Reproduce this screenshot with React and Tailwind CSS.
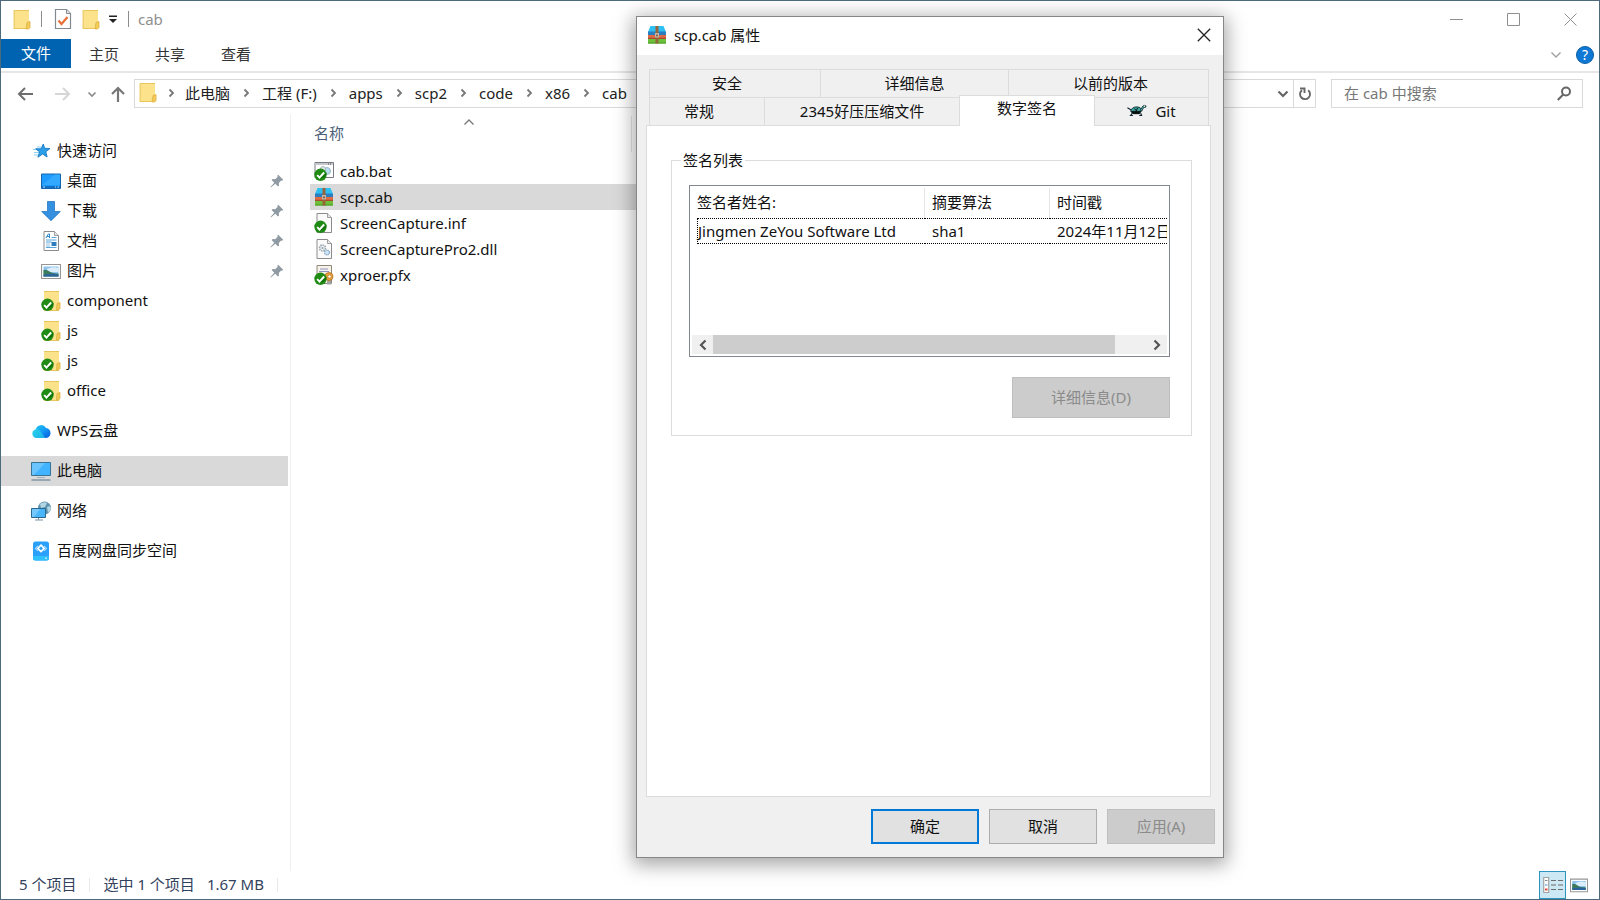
import React from "react";

const Folder = ({ className = "" }) => (
  <svg viewBox="0 0 18 21" className={"h-[21px] w-[18px] shrink-0 " + className} aria-hidden="true">
    <path d="M1 1h15v19H1z" fill="#fbe28b" />
    <path d="M1 1h15v1H1z" fill="#e8c65e" />
    <path d="M0.5 1h1.5v19H0.5z" fill="#efd070" />
    <path d="M1 19h15v1H1z" fill="#e9c65c" />
    <path d="M14 13.5l3-1v6l-1.5 1.5H13z" fill="#f3cb56" stroke="#dbb142" strokeWidth=".8" />
  </svg>
);

const Check = () => (
  <g>
    <circle cx="6.5" cy="13.8" r="6.2" fill="#1f8a14" />
    <path d="M3 16a6 6 0 0 0 9.5-4.500A9 9 0 0 1 3 16z" fill="#0d6a08" />
    <path d="M3.200 14.200l2.300 2.500 4.600-5.200" fill="none" stroke="#fff" strokeWidth="1.900" />
  </g>
);

const SyncedFolder = () => (
  <svg viewBox="0 0 20 20" className="h-5 w-5 shrink-0" aria-hidden="true">
    <path d="M3 0h15v20H3z" fill="#fbe28b" />
    <path d="M3 0h15v1H3zM3 19h15v1H3z" fill="#e8c65e" />
    <path d="M16 12.500l3-1v6l-1.500 1.500H15.500z" fill="#f3cb56" stroke="#dbb142" strokeWidth=".8" />
    <Check />
  </svg>
);

const Chevron = ({ d, className = "", width = 2 }) => (
  <svg viewBox="0 0 12 12" className={"h-3 w-3 shrink-0 " + className} fill="none" stroke="currentColor" strokeWidth={width} aria-hidden="true">
    <path d={d} />
  </svg>
);
const DOWN = "M1.500 3.500L6 8l4.500-4.500";
const RIGHT = "M4.500 2.500L8 6 4.500 9.500";
const UP = "M1.500 8.500L6 4l4.500 4.500";

const Star = () => (
  <svg viewBox="0 0 20 20" className="h-5 w-5 shrink-0" aria-hidden="true">
    <path d="M2 8.500h6M3 11.500h5M3 14h4M6 6h4" stroke="#8fd0f7" strokeWidth="1" />
    <path d="M12.300 3l1.300 4.300 5.400.2-4.200 3.200 1.300 5.300-4.500-3-4.700 3.200 1.700-5.300-3.900-3.100h5.400z" fill="#2d9fe8" stroke="#1478c4" strokeWidth=".9" />
  </svg>
);
const Desktop = () => (
  <svg viewBox="0 0 20 20" className="h-5 w-5 shrink-0" aria-hidden="true">
    <path d="M.5 3h19v14.500H.5z" fill="#1e9bff" stroke="#1566ac" />
    <path d="M1 14L14 3.500h5V14z" fill="#40b0ff" opacity=".6" />
    <path d="M1 15h18v2H1z" fill="#0f6fc4" />
    <path d="M2 16h2M14 16h1M16.500 16h1.500" stroke="#bfe2ff" />
  </svg>
);
const Download = () => (
  <svg viewBox="0 0 20 20" className="h-5 w-5 shrink-0" aria-hidden="true">
    <path d="M6.500.5h7v10h5.800L10 19.700.7 10.500h5.800z" fill="#3590e0" stroke="#2377c6" strokeWidth=".8" />
  </svg>
);
const Doc = () => (
  <svg viewBox="0 0 20 20" className="h-5 w-5 shrink-0" aria-hidden="true">
    <path d="M3 .5h10.500L17.500 4.500v15H3z" fill="#fff" stroke="#8b8b8b" />
    <path d="M13.500.5v4h4" fill="#e6e6e6" stroke="#8b8b8b" strokeWidth=".8" />
    <path d="M5 7l2.300-4h1.200v4M6 5.500h3" fill="none" stroke="#2a88cf" />
    <path d="M10.500 6.500h5M5 9h10.500M5 11h5.500M5 16.500h10.500" stroke="#58a5dc" />
    <path d="M5 13h4M5 15h4" stroke="#8ebfe2" />
    <path d="M10.500 11h5v4h-5z" fill="#2f7fc0" />
  </svg>
);
const Picture = ({ className = "h-5 w-5" }) => (
  <svg viewBox="0 0 20 20" className={"shrink-0 " + className} aria-hidden="true">
    <path d="M.5 3.500h19v14H.5z" fill="#fff" stroke="#969696" strokeWidth="1.200" />
    <path d="M2.500 5.500h15v10h-15z" fill="#8fc4ef" />
    <path d="M6 8q5-3 11.500-1v4H6z" fill="#dceefa" />
    <path d="M2.500 9q3-1 6 1.500t9 2v3h-15z" fill="#3c7a5c" />
    <path d="M2.500 14q8-2 15-.5v2h-15z" fill="#2d649b" />
  </svg>
);
const Cloud = () => (
  <svg viewBox="0 0 20 20" className="h-5 w-5 shrink-0" aria-hidden="true">
    <defs>
      <linearGradient id="cloud" x1="0" y1="0" x2="1" y2="1">
        <stop offset="0" stopColor="#24d0f2" />
        <stop offset=".5" stopColor="#139bf5" />
        <stop offset="1" stopColor="#0755dc" />
      </linearGradient>
    </defs>
    <path d="M5.500 17a4.500 4.500 0 0 1-.7-8.600A5.500 5.500 0 0 1 15 7a5 5 0 0 1-1 10z" fill="url(#cloud)" />
    <path d="M1 12.500a4.500 4.500 0 0 1 7.500-3.300c2.500 2 3 5 6 7.800h-9A4.500 4.500 0 0 1 1 12.500z" fill="#29d5e6" opacity=".65" />
  </svg>
);
const Computer = () => (
  <svg viewBox="0 0 20 20" className="h-5 w-5 shrink-0" aria-hidden="true">
    <path d="M.5 1.500h19v13H.5z" fill="#42b4ff" stroke="#377498" />
    <path d="M1 2h13L3 14H1z" fill="#86d1ff" opacity=".6" />
    <path d="M6 16.500h8" stroke="#9eb3c1" />
    <path d="M.5 19h19" stroke="#758b9d" strokeWidth="1.300" />
  </svg>
);
const Network = () => (
  <svg viewBox="0 0 20 20" className="h-5 w-5 shrink-0" aria-hidden="true">
    <circle cx="13.500" cy="7" r="6.500" fill="#5d93ad" />
    <path d="M9 3q4-3 7-1l-2 4-4 1zM16 6l3-1 1 3-3 4z" fill="#b4d5e2" />
    <path d="M.5 7.500h14v9H.5z" fill="#49b5fb" stroke="#2c688d" />
    <path d="M1 8h8l-6 8H1z" fill="#92d5ff" opacity=".6" />
    <path d="M4 19h8M7.500 17v2" stroke="#7c94a4" />
  </svg>
);
const Baidu = () => (
  <svg viewBox="0 0 20 20" className="h-5 w-5 shrink-0" aria-hidden="true">
    <rect x="2" y=".5" width="16" height="19" rx="2.500" fill="#2ba0fa" />
    <path d="M2 15h16v2a2.500 2.500 0 0 1-2.500 2.500h-11A2.500 2.500 0 0 1 2 17z" fill="#30c0fb" />
    <path d="M10 4.200l3.200 3.200L10 10.600 6.800 7.400z" fill="none" stroke="#fff" strokeWidth="1.700" />
    <path d="M6.800 5L4.500 7.400l2.300 2.400M13.200 5l2.300 2.400-2.300 2.400" fill="none" stroke="#a5d8ff" strokeWidth="1.100" />
    <circle cx="15" cy="17.200" r=".8" fill="#fff" />
  </svg>
);
const Pin = () => (
  <svg viewBox="0 0 14 14" className="h-[14px] w-[14px] shrink-0" aria-hidden="true">
    <path d="M8.200.8l5 5-1 .9-1-.3-2.400 2.500.2 2.500-1 1L5.300 9.700.8 13.400l-.4-.3L4.300 8.700 1.600 6l1-1 2.600.2 2.500-2.400-.4-1z" fill="#8f9aa3" />
  </svg>
);

const Archive = () => (
  <svg viewBox="0 0 20 20" className="h-5 w-5 shrink-0" aria-hidden="true">
    <path d="M3.500 1h13L19 7H1z" fill="#2fc0f3" />
    <path d="M1 6.500h18v3.500H1z" fill="#2a7fc0" />
    <path d="M1 10h18v4H1z" fill="#dd6a44" />
    <path d="M1 12.800h18v1.200H1z" fill="#a9492f" />
    <path d="M1 14h18v4.500H1z" fill="#6cc03a" />
    <path d="M1 17.500h18v1H1z" fill="#4a9a2a" />
    <path d="M8.500 1h3v17.500h-3z" fill="#97653a" />
    <path d="M8 8h4v4.500H8z" fill="#c3b6a8" />
    <path d="M9.200 9.500h1.600v1.800H9.200z" fill="#795032" />
  </svg>
);
const Bat = () => (
  <svg viewBox="0 0 20 20" className="h-5 w-5 shrink-0" aria-hidden="true">
    <path d="M1 1.500h18.500v15H1z" fill="#fff" stroke="#777b80" />
    <path d="M1.500 2h17.500v2H1.500z" fill="#c5c9ce" />
    <path d="M14 3h1M16 3h1" stroke="#555" />
    <circle cx="13" cy="10" r="3.500" fill="#b9dcef" stroke="#8aafc2" strokeWidth=".8" />
    <circle cx="9" cy="8" r="2.500" fill="#dfe7eb" stroke="#9aa" strokeWidth=".8" />
    <Check />
  </svg>
);
const Page = ({ children }) => (
  <svg viewBox="0 0 20 20" className="h-5 w-5 shrink-0" aria-hidden="true">
    <path d="M3 .5h10.500l4 4v15H3z" fill="#fbfbfb" stroke="#8b8b8b" />
    <path d="M13.500.5v4h4" fill="#e6e6e6" stroke="#8b8b8b" strokeWidth=".8" />
    {children}
  </svg>
);
const Inf = () => (
  <Page>
    <Check />
  </Page>
);
const Dll = () => (
  <Page>
    <circle cx="8.500" cy="9" r="3" fill="#e6ecef" stroke="#9aa6ad" strokeWidth="1.500" strokeDasharray="1.500 .8" />
    <circle cx="8.500" cy="9" r="1" fill="#9aa6ad" />
    <circle cx="13" cy="13.500" r="2.500" fill="#cfe3f2" stroke="#86a9c6" strokeWidth="1.300" strokeDasharray="1.300 .7" />
  </Page>
);
const Pfx = () => (
  <svg viewBox="0 0 20 20" className="h-5 w-5 shrink-0" aria-hidden="true">
    <path d="M3 .5h14.500v18H3z" fill="#f7f3ea" stroke="#8f8779" />
    <path d="M6 4h8M5 6.500h10" stroke="#8c93c0" />
    <path d="M13 15v4.500h4V15z" fill="#a3a3a3" />
    <circle cx="15" cy="11.500" r="4" fill="#e9a33c" stroke="#b26f1c" strokeWidth=".8" />
    <circle cx="15.500" cy="11.500" r="1.600" fill="#fff" stroke="#b26f1c" strokeWidth=".6" />
    <Check />
  </svg>
);

const Turtle = () => (
  <svg viewBox="0 0 22 14" className="h-[13px] w-5 shrink-0" aria-hidden="true">
    <path d="M.5 4l5 3M6 10l-2 2.500h2.500M15 10l1 2.500h-2.500" fill="none" stroke="#123" strokeWidth="1.300" />
    <path d="M4 8q1-5 7-5 4 0 5 3l-2 4H6z" fill="#3fa29f" stroke="#102a2a" strokeWidth=".9" />
    <path d="M8 5l3 2.500M12 4l-2 3M5 8h10l-1.500 2.500H7z" fill="#050c0c" stroke="#050c0c" />
    <path d="M15 6l2.500-4q2-1.200 3.500 0l-.5 1.500h-2L16 8z" fill="#4eb0ac" stroke="#102a2a" strokeWidth=".9" />
    <circle cx="19.200" cy="2.300" r=".7" fill="#fff" />
  </svg>
);

const places = [
  { name: "桌面", Icon: Desktop, pinned: true },
  { name: "下载", Icon: Download, pinned: true },
  { name: "文档", Icon: Doc, pinned: true },
  { name: "图片", Icon: Picture, pinned: true },
  { name: "component", Icon: SyncedFolder },
  { name: "js", Icon: SyncedFolder },
  { name: "js", Icon: SyncedFolder },
  { name: "office", Icon: SyncedFolder },
];
const roots = [
  { name: "WPS云盘", Icon: Cloud },
  { name: "此电脑", Icon: Computer, selected: true },
  { name: "网络", Icon: Network },
  { name: "百度网盘同步空间", Icon: Baidu },
];
const files = [
  { name: "cab.bat", Icon: Bat },
  { name: "scp.cab", Icon: Archive, selected: true },
  { name: "ScreenCapture.inf", Icon: Inf },
  { name: "ScreenCapturePro2.dll", Icon: Dll },
  { name: "xproer.pfx", Icon: Pfx },
];
const crumbs = ["此电脑", "工程 (F:)", "apps", "scp2", "code", "x86", "cab"];

function TitleBar() {
  return (
    <header className="flex h-[38px] items-center pb-0.5 pl-3">
      <Folder />
      <span className="ml-2.5 h-4 w-px bg-[#8c8c8c]" />
      <button aria-label="属性" className="ml-3">
        <svg viewBox="0 0 18 20" className="h-5 w-[18px]" aria-hidden="true">
          <path d="M1.500.5h11l4 4v15h-15z" fill="#fff" stroke="#848b90" strokeWidth="1.200" />
          <path d="M12.500.5v4h4" fill="#dfe2e4" stroke="#848b90" />
          <path d="M4.500 11.500l3 3.500 6-7" fill="none" stroke="#e8703a" strokeWidth="2.200" />
        </svg>
      </button>
      <button aria-label="新建文件夹" className="ml-2.5"><Folder /></button>
      <button aria-label="自定义快速访问工具栏" className="ml-2">
        <svg viewBox="0 0 10 8" className="h-2 w-2.5" aria-hidden="true">
          <path d="M1 .5h8v1.500H1zM1 4h8L5 8z" fill="#222" />
        </svg>
      </button>
      <span className="ml-2.5 h-4 w-px bg-[#8c8c8c]" />
      <h1 className="ml-[9px] flex-1 text-[#8f8f8f]">cab</h1>
      <div className="flex h-full text-[#8f8f8f]">
        <button aria-label="最小化" className="flex w-[57px] items-center justify-center">
          <svg viewBox="0 0 13 13" className="h-[13px] w-[13px]"><path d="M0 6.500h13" stroke="currentColor" /></svg>
        </button>
        <button aria-label="最大化" className="flex w-[57px] items-center justify-center">
          <svg viewBox="0 0 13 13" className="h-[13px] w-[13px]"><path d="M.5.5h12v12H.5z" fill="none" stroke="currentColor" /></svg>
        </button>
        <button aria-label="关闭" className="flex w-[57px] items-center justify-center">
          <svg viewBox="0 0 13 13" className="h-[13px] w-[13px]"><path d="M.5.5l12 12M12.500.5l-12 12" stroke="currentColor" /></svg>
        </button>
      </div>
    </header>
  );
}

function Ribbon() {
  return (
    <nav className="flex h-[34px] items-start border-b-2 border-[#e6e6e6] text-[#333]">
      <button className="h-[29px] w-[70px] bg-[#0063b1] pb-0.5 text-white">文件</button>
      {["主页", "共享", "查看"].map((t) => (
        <button key={t} className="h-[29px] w-[66px]">{t}</button>
      ))}
      <div className="ml-auto flex h-8 items-center gap-3.5 pr-[5px]">
        <button aria-label="展开功能区" className="text-[#a3a3a3]"><Chevron d={DOWN} width={1.5} /></button>
        <button aria-label="帮助" className="flex h-[18px] w-[18px] items-center justify-center rounded-full border border-[#0a5fa8] bg-[#0f78d4] text-sm leading-4 text-white">?</button>
      </div>
    </nav>
  );
}

function AddressRow() {
  return (
    <div className="flex h-[41px] items-center pr-4 pl-[15px]">
      <button aria-label="后退" className="text-[#6e6e6e]">
        <svg viewBox="0 0 18 16" className="h-4 w-[18px]" fill="none" stroke="currentColor" strokeWidth="2"><path d="M17 8H3M9 2L3 8l6 6" /></svg>
      </button>
      <button aria-label="前进" className="ml-5 text-[#d6d6d6]">
        <svg viewBox="0 0 18 16" className="h-4 w-[18px]" fill="none" stroke="currentColor" strokeWidth="2"><path d="M1 8h14M9 2l6 6-6 6" /></svg>
      </button>
      <button aria-label="最近浏览的位置" className="ml-3.5 text-[#8c8c8c]"><Chevron d="M2.500 4.500L6 8l3.500-3.500" width={1.700} /></button>
      <button aria-label="上移" className="ml-3 text-[#777]">
        <svg viewBox="0 0 16 18" className="h-[18px] w-4" fill="none" stroke="currentColor" strokeWidth="2.200"><path d="M8 17V3M2 9l6-6 6 6" /></svg>
      </button>
      <div className="ml-2 flex h-[29px] flex-1 items-stretch border border-[#d9d9d9]">
        <div className="flex flex-1 items-center pb-0.5 pl-1">
          <Folder />
          {crumbs.map((c, i) => (
            <React.Fragment key={c}>
              <span className={"flex justify-center " + (i ? "w-8" : "w-7")}>
                <Chevron d={RIGHT} width={1.800} className="text-[#777]" />
              </span>
              <a href="#" className="whitespace-nowrap text-[#222]">{c}</a>
            </React.Fragment>
          ))}
        </div>
        <button aria-label="以前的位置" className="flex w-5 items-center justify-center text-[#666]"><Chevron d={DOWN} width={2.200} /></button>
        <button aria-label="刷新" className="flex w-[22px] items-center justify-center border-l border-[#d9d9d9] text-[#666]">
          <svg viewBox="0 0 14 14" className="h-[14px] w-[14px]" fill="none" stroke="currentColor" strokeWidth="1.900">
            <path d="M10.200 3.300A5 5 0 1 1 4 3.200" />
            <path d="M2 1.500h4.500V6" />
          </svg>
        </button>
      </div>
      <label className="ml-[15px] flex h-[29px] w-[252px] items-center border border-[#d9d9d9] pr-2.5 pl-3">
        <input type="text" aria-label="搜索" placeholder="在 cab 中搜索" className="min-w-0 flex-1 bg-transparent pb-0.5 outline-none placeholder:text-[#777]" />
        <svg viewBox="0 0 15 15" className="h-[15px] w-[15px] text-[#666]" fill="none" stroke="currentColor" strokeWidth="2" aria-hidden="true">
          <circle cx="9" cy="5.500" r="4" />
          <path d="M6.200 8.500L.8 14" />
        </svg>
      </label>
    </div>
  );
}

function Sidebar() {
  return (
    <aside className="w-[290px] shrink-0 border-r border-[#f0f0f0] pt-[22px]">
      <a href="#" className="flex h-[30px] items-center gap-1.5 pl-[30px]"><Star /><span className="pb-0.5">快速访问</span></a>
      <ul>
        {places.map(({ name, Icon, pinned }, i) => (
          <li key={i}>
            <a href="#" className="flex h-[30px] items-center gap-1.5 pr-1.5 pl-10">
              <Icon />
              <span className="flex-1 pb-0.5">{name}</span>
              {pinned && <Pin />}
            </a>
          </li>
        ))}
      </ul>
      <ul className="mt-2.5 flex flex-col gap-2.5 pr-0.5">
        {roots.map(({ name, Icon, selected }) => (
          <li key={name}>
            <a href="#" className={"flex h-[30px] items-center gap-1.5 pl-[30px] " + (selected ? "bg-[#d9d9d9]" : "")}>
              <Icon />
              <span className="pb-0.5">{name}</span>
            </a>
          </li>
        ))}
      </ul>
    </aside>
  );
}

function FileList() {
  return (
    <main className="flex-1 pt-0.5 pl-[19px]">
      <table className="w-[326px] border-collapse text-left">
        <thead>
          <tr>
            <th className="relative h-[42px] pb-2 pl-1 font-normal text-[#4c607a]">
              名称
              <Chevron d={UP} width={1.300} className="absolute top-0 left-[153px] text-[#777]" />
              <span className="absolute top-0 right-1 h-9 w-px bg-[#e5e5e5]" />
            </th>
          </tr>
        </thead>
        <tbody>
          {files.map(({ name, Icon, selected }) => (
            <tr key={name} className={selected ? "bg-[#d9d9d9]" : ""}>
              <td className="h-[26px]">
                <span className="flex items-center gap-1.5 pl-1"><Icon />{name}</span>
              </td>
            </tr>
          ))}
        </tbody>
      </table>
    </main>
  );
}

function StatusBar() {
  return (
    <footer className="flex h-7 items-center pl-[18px] text-[#33425c]">
      <span className="pb-0.5">5 个项目</span>
      <span className="mx-[13px] h-3.5 w-px bg-[#e8e8e8]" />
      <span className="pb-0.5">选中 1 个项目</span>
      <span className="ml-3 pb-0.5">1.67 MB</span>
      <span className="ml-[13px] h-3.5 w-px bg-[#e8e8e8]" />
      <div className="ml-auto flex items-center gap-1 pr-[11px]">
        <button aria-label="详细信息视图" className="flex h-7 w-[27px] items-center justify-center border border-[#2f93c0] bg-[#cce8f4]">
          <svg viewBox="0 0 20 18" className="h-[18px] w-5" aria-hidden="true">
            <path d="M.7 1.500h5v15h-5z" fill="#fff" stroke="#a2a2a2" strokeWidth="1.200" />
            <path d="M2 4.500h2.500" stroke="#888" />
            <path d="M2 9h2.500" stroke="#4a90d0" />
            <path d="M2 13.500h2.500" stroke="#e04a3a" strokeWidth="2" />
            <path d="M8 4.500h5M15 4.500h5M8 9h5M15 9h5M8 13.500h5M15 13.500h5" stroke="#6d6d6d" strokeWidth="1.200" />
          </svg>
        </button>
        <button aria-label="大图标视图"><Picture className="h-[18px] w-[18px]" /></button>
      </div>
    </footer>
  );
}

const tab = "flex items-center justify-center gap-2 border-[#dcdcdc]";

function Dialog() {
  return (
    <section role="dialog" aria-label="scp.cab 属性" className="absolute top-[15px] left-[635px] flex h-[842px] w-[588px] flex-col border border-[#858786] bg-[#f0f0f0] shadow-[0_4px_18px_3px_rgba(0,0,0,0.35)]">
      <header className="flex h-[38px] items-center bg-white pr-3 pb-0.5 pl-2.5">
        <Archive />
        <h2 className="ml-[7px] flex-1">scp.cab 属性</h2>
        <button aria-label="关闭">
          <svg viewBox="0 0 14 14" className="h-[14px] w-[14px]" aria-hidden="true"><path d="M.8.8l12.400 12.400M13.200.8L.8 13.200" stroke="#222" strokeWidth="1.300" /></svg>
        </button>
      </header>

      <div className="flex flex-1 flex-col pt-3.5 pr-3 pl-[9px]">
        <div role="tablist" className="mr-0.5 ml-[3px]">
          <div className="flex h-7 border-t border-l border-[#dcdcdc]">
            <button role="tab" className={tab + " w-[171px] border-r pr-4 pb-0.5"}>安全</button>
            <button role="tab" className={tab + " w-[188px] border-r pb-0.5"}>详细信息</button>
            <button role="tab" className={tab + " flex-1 border-r pl-1 pb-0.5"}>以前的版本</button>
          </div>
          <div className="flex h-7 items-end border-l border-[#dcdcdc]">
            <button role="tab" className={tab + " h-7 w-[115px] border-t border-r pr-4 pb-0.5"}>常规</button>
            <button role="tab" className={tab + " h-7 w-[194px] border-t pb-0.5"}>2345好压压缩文件</button>
            <button role="tab" aria-selected="true" className={tab + " relative z-10 -mb-px h-[31px] w-[136px] border-x border-t bg-white pb-1.5"}>数字签名</button>
            <button role="tab" className={tab + " h-7 flex-1 border-t border-r pb-0.5"}><Turtle />Git</button>
          </div>
        </div>

        <div role="tabpanel" className="flex-1 border border-[#dcdcdc] bg-white pt-6 pr-[18px] pl-6">
          <fieldset className="min-w-0 border border-[#dcdcdc] pr-[21px] pb-[17px] pl-[17px]">
            <legend className="-ml-2 px-0.5 leading-5">签名列表</legend>
            <div className="mt-[15px] flex h-[172px] flex-col overflow-hidden border border-[#828790] p-0.5">
              <div className="flex-1 overflow-hidden pl-[5px]">
                <table className="w-[640px] table-fixed border-separate border-spacing-0 text-left whitespace-nowrap">
                  <thead>
                    <tr className="h-[30px]">
                      <th className="w-[228px] border-r border-[#e5e5e5] pb-0.5 font-normal">签名者姓名:</th>
                      <th className="w-[125px] border-r border-[#e5e5e5] pb-0.5 pl-[7px] font-normal">摘要算法</th>
                      <th className="pb-0.5 pl-[7px] font-normal">时间戳</th>
                    </tr>
                  </thead>
                  <tbody>
                    <tr className="h-[26px]">
                      <td className="border-y border-l border-dotted border-black">Jingmen ZeYou Software Ltd</td>
                      <td className="border-y border-dotted border-black pl-[7px]">sha1</td>
                      <td className="border-y border-dotted border-black pl-[7px]">2024年11月12日</td>
                    </tr>
                  </tbody>
                </table>
              </div>
              <div className="flex h-[19px] bg-[#f0f0f0] text-[#555]">
                <button aria-label="向左滚动" className="flex w-[21px] items-center justify-center"><Chevron d="M8.500 1.500L4 6l4.500 4.500" width={2.200} /></button>
                <div className="flex-1"><div className="h-full w-[93%] max-w-[402px] bg-[#cdcdcd]" /></div>
                <button aria-label="向右滚动" className="flex w-[21px] items-center justify-center"><Chevron d="M3.500 1.500L8 6l-4.500 4.500" width={2.200} /></button>
              </div>
            </div>
            <div className="mt-5 flex justify-end">
              <button disabled className="h-[41px] w-[158px] border border-[#bfbfbf] bg-[#cccccc] pb-0.5 text-[#8b8b8b]">详细信息(D)</button>
            </div>
          </fieldset>
        </div>
      </div>

      <footer className="flex h-[60px] items-start justify-end gap-2.5 pt-3 pr-2">
        <button className="h-[35px] w-[108px] border-2 border-[#0078d7] bg-[#e1e1e1] pb-0.5">确定</button>
        <button className="h-[35px] w-[108px] border border-[#adadad] bg-[#e1e1e1] pb-0.5">取消</button>
        <button disabled className="h-[35px] w-[108px] border border-[#bfbfbf] bg-[#cccccc] pb-0.5 text-[#8b8b8b]">应用(A)</button>
      </footer>
    </section>
  );
}

export default function App() {
  return (
    <div className="relative flex min-h-screen flex-col overflow-hidden border border-[#4b6a7b] bg-white font-['Noto_Sans','Noto_Sans_CJK_SC',sans-serif] text-[15px] leading-5 text-[#111]">
      <TitleBar />
      <Ribbon />
      <AddressRow />
      <div className="flex flex-1">
        <Sidebar />
        <FileList />
      </div>
      <StatusBar />
      <Dialog />
    </div>
  );
}
